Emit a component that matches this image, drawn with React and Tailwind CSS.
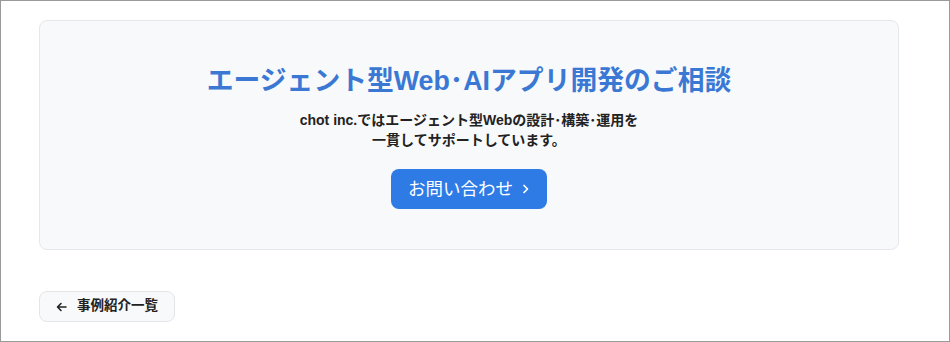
import React from 'react';

const font = { fontFamily: '"Liberation Sans", "Noto Sans CJK JP", sans-serif' };

export default function App() {
  return (
    <div className="w-[950px] h-[342px] border border-[#9a9a9a] bg-white pl-[38px] pt-[19px]" style={font}>
      {/* CTA card */}
      <section className="w-[860px] h-[230px] rounded-lg border border-[#e5e7eb] bg-[#f8f9fa] flex flex-col items-center pt-[42px]">
        <h2 className="text-[26.8px] leading-[36px] font-bold text-[#3a78d4]">
          エージェント型Web･AIアプリ開発のご相談
        </h2>
        <p className="mt-[11px] text-[14px] leading-[20px] font-bold text-[#222] text-center">
          chot inc.ではエージェント型Webの設計･構築･運用を
          <br />
          一貫してサポートしています。
        </p>
        <button className="mt-[19px] h-[40px] w-[156px] rounded-lg bg-[#2f7be6] text-white text-[17.5px] flex items-center justify-center gap-[9px]">
          <span>お問い合わせ</span>
          <svg width="8" height="12" viewBox="0 0 8 12" fill="none">
            <path d="M2 2.5 L5.5 6 L2 9.5" stroke="white" strokeWidth="1.7" strokeLinecap="round" strokeLinejoin="round" />
          </svg>
        </button>
      </section>

      {/* back link */}
      <button className="mt-[41px] h-[31px] w-[136px] rounded-lg border border-[#e3e5e8] bg-[#f8f9fa] flex items-center pl-[16px] gap-[10px] text-[13.5px] font-bold text-[#222]">
        <svg width="11" height="10" viewBox="0 0 11 10" fill="none">
          <path d="M10 5 H1.5 M5 1.5 L1.5 5 L5 8.5" stroke="#222" strokeWidth="1.6" strokeLinecap="round" strokeLinejoin="round" />
        </svg>
        <span>事例紹介一覧</span>
      </button>
    </div>
  );
}
